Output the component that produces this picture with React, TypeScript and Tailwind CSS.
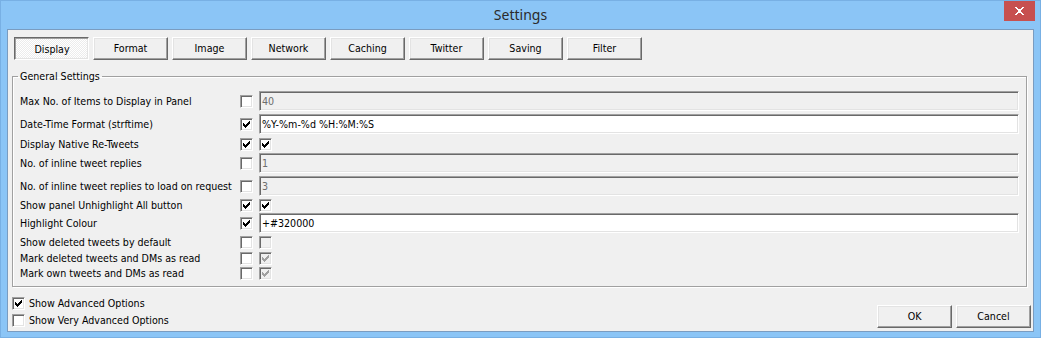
import React from "react";

const tabs = ["Display", "Format", "Image", "Network", "Caching", "Twitter", "Saving", "Filter"];

type Row = {
  label: string;
  h: string;
  on: boolean;
  field?: { value: string; disabled: boolean };
  box?: { checked: boolean; disabled: boolean };
};

const rows: Row[] = [
  { label: "Max No. of Items to Display in Panel", h: "h-[20px]", on: false, field: { value: "40", disabled: true } },
  { label: "Date-Time Format (strftime)", h: "h-[26px]", on: true, field: { value: "%Y-%m-%d %H:%M:%S", disabled: false } },
  { label: "Display Native Re-Tweets", h: "h-[14px]", on: true, box: { checked: true, disabled: false } },
  { label: "No. of inline tweet replies", h: "h-[24px]", on: false, field: { value: "1", disabled: true } },
  { label: "No. of inline tweet replies to load on request", h: "h-[22px]", on: false, field: { value: "3", disabled: true } },
  { label: "Show panel Unhighlight All button", h: "h-[16px]", on: true, box: { checked: true, disabled: false } },
  { label: "Highlight Colour", h: "h-[20px]", on: true, field: { value: "+#320000", disabled: false } },
  { label: "Show deleted tweets by default", h: "h-[18px]", on: false, box: { checked: false, disabled: true } },
  { label: "Mark deleted tweets and DMs as read", h: "h-[14px]", on: false, box: { checked: true, disabled: true } },
  { label: "Mark own tweets and DMs as read", h: "h-[16px]", on: false, box: { checked: true, disabled: true } },
];

function Check({ checked, disabled }: { checked?: boolean; disabled?: boolean }) {
  return (
    <span
      className={`flex h-[13px] w-[13px] shrink-0 items-center justify-center border border-t-[#a0a0a0] border-l-[#a0a0a0] border-r-white border-b-white shadow-[inset_1px_1px_0_#696969,inset_-1px_-1px_0_#e3e3e3] ${
        disabled ? "bg-[#f0f0f0]" : "bg-white"
      }`}
    >
      {checked && (
        <svg width="7" height="7" viewBox="0 0 7 7" shapeRendering="crispEdges">
          <path
            d="M6 0h1v1h-1z M5 1h2v1h-2z M0 2h1v1h-1z M4 2h3v1h-3z M0 3h2v1h-2z M3 3h3v1h-3z M0 4h5v1h-5z M1 5h3v1h-3z M2 6h1v1h-1z"
            fill={disabled ? "#a0a0a0" : "#000000"}
          />
        </svg>
      )}
    </span>
  );
}

function Field({ value, disabled }: { value: string; disabled: boolean }) {
  return (
    <div
      className={`flex h-[20px] flex-1 items-center border border-t-[#a0a0a0] border-l-[#a0a0a0] border-r-white border-b-white pl-[2px] shadow-[inset_1px_1px_0_#696969,inset_-1px_-1px_0_#e3e3e3] ${
        disabled ? "bg-[#f0f0f0] text-[#6d6d6d]" : "bg-white text-black"
      }`}
    >
      {value}
    </div>
  );
}

function Button({ label, pressed }: { label: string; pressed?: boolean }) {
  if (pressed) {
    return (
      <button className="flex h-[23px] w-[75px] items-center justify-center border border-t-[#696969] border-l-[#696969] border-r-white border-b-white bg-[repeating-conic-gradient(#ffffff_0%_25%,#ececec_0%_50%)] bg-[length:2px_2px] pl-[1px] pt-[1px] text-black shadow-[inset_1px_1px_0_#a0a0a0,inset_-1px_-1px_0_#e3e3e3]">
        {label}
      </button>
    );
  }
  return (
    <button className="flex h-[23px] w-[75px] items-center justify-center border border-t-white border-l-white border-r-[#696969] border-b-[#696969] bg-[#f0f0f0] text-black shadow-[inset_-1px_-1px_0_#a0a0a0,inset_1px_1px_0_#e3e3e3]">
      {label}
    </button>
  );
}

export default function App() {
  return (
    <div className="flex h-[338px] w-[1041px] flex-col border border-[#78b0e4] bg-[#8bc5f6] font-['DejaVu_Sans_Condensed','Liberation_Sans',sans-serif] text-[10.6px] leading-[13px] text-black">
      {/* Title bar */}
      <div className="relative flex h-[28px] items-center justify-center">
        <span className="font-['Noto_Sans',sans-serif] text-[14px] leading-[18px] text-[#2b2b2b]">Settings</span>
        <div className="absolute right-[5px] top-0 flex h-[20px] w-[31px] items-center justify-center bg-[#c75050]">
          <svg width="9" height="8" viewBox="0 0 9 8" shapeRendering="crispEdges">
            <path d="M0 0h2v1h1v1h3v-1h1v-1h2v1h-1v1h-1v1h-1v2h1v1h1v1h1v1h-2v-1h-1v-1h-3v1h-1v1h-2v-1h1v-1h1v-1h1v-2h-1v-1h-1v-1h-1z" fill="#ffffff" />
          </svg>
        </div>
      </div>

      <div className="flex flex-1 px-[6px] pb-[5px]">
        <div className="flex flex-1 flex-col border border-[#7a9cc0] bg-[#f0f0f0]">
          {/* Tabs */}
          <div className="ml-[6px] mt-[7px] flex gap-[4px]">
            {tabs.map((t, i) => (
              <Button key={t} label={t} pressed={i === 0} />
            ))}
          </div>

          {/* General Settings group */}
          <fieldset className="ml-[4px] mr-[6px] mt-[10px] border border-[#a0a0a0] pb-[5px] pl-[7px] pr-[7px] pt-[8px] shadow-[inset_1px_1px_0_#ffffff,1px_1px_0_#ffffff]">
            <legend className="ml-[-2px] px-[2px] leading-[13px]">General Settings</legend>
            <div className="flex flex-col">
              {rows.map((r) => (
                <div key={r.label} className={`flex items-center ${r.h}`}>
                  <span className="w-[220px] shrink-0 whitespace-nowrap">{r.label}</span>
                  <Check checked={r.on} />
                  <div className="ml-[6px] flex flex-1 items-center">
                    {r.field && <Field value={r.field.value} disabled={r.field.disabled} />}
                    {r.box && <Check checked={r.box.checked} disabled={r.box.disabled} />}
                  </div>
                </div>
              ))}
            </div>
          </fieldset>

          {/* Footer */}
          <div className="flex justify-between">
            <div className="mt-[8px] flex flex-col pl-[4px]">
              <div className="flex h-[17px] items-center gap-[4px]">
                <Check checked />
                <span>Show Advanced Options</span>
              </div>
              <div className="flex h-[17px] items-center gap-[4px]">
                <Check />
                <span>Show Very Advanced Options</span>
              </div>
            </div>
            <div className="mr-[2px] mt-[18px] flex gap-[4px]">
              <Button label="OK" />
              <Button label="Cancel" />
            </div>
          </div>
        </div>
      </div>
    </div>
  );
}
